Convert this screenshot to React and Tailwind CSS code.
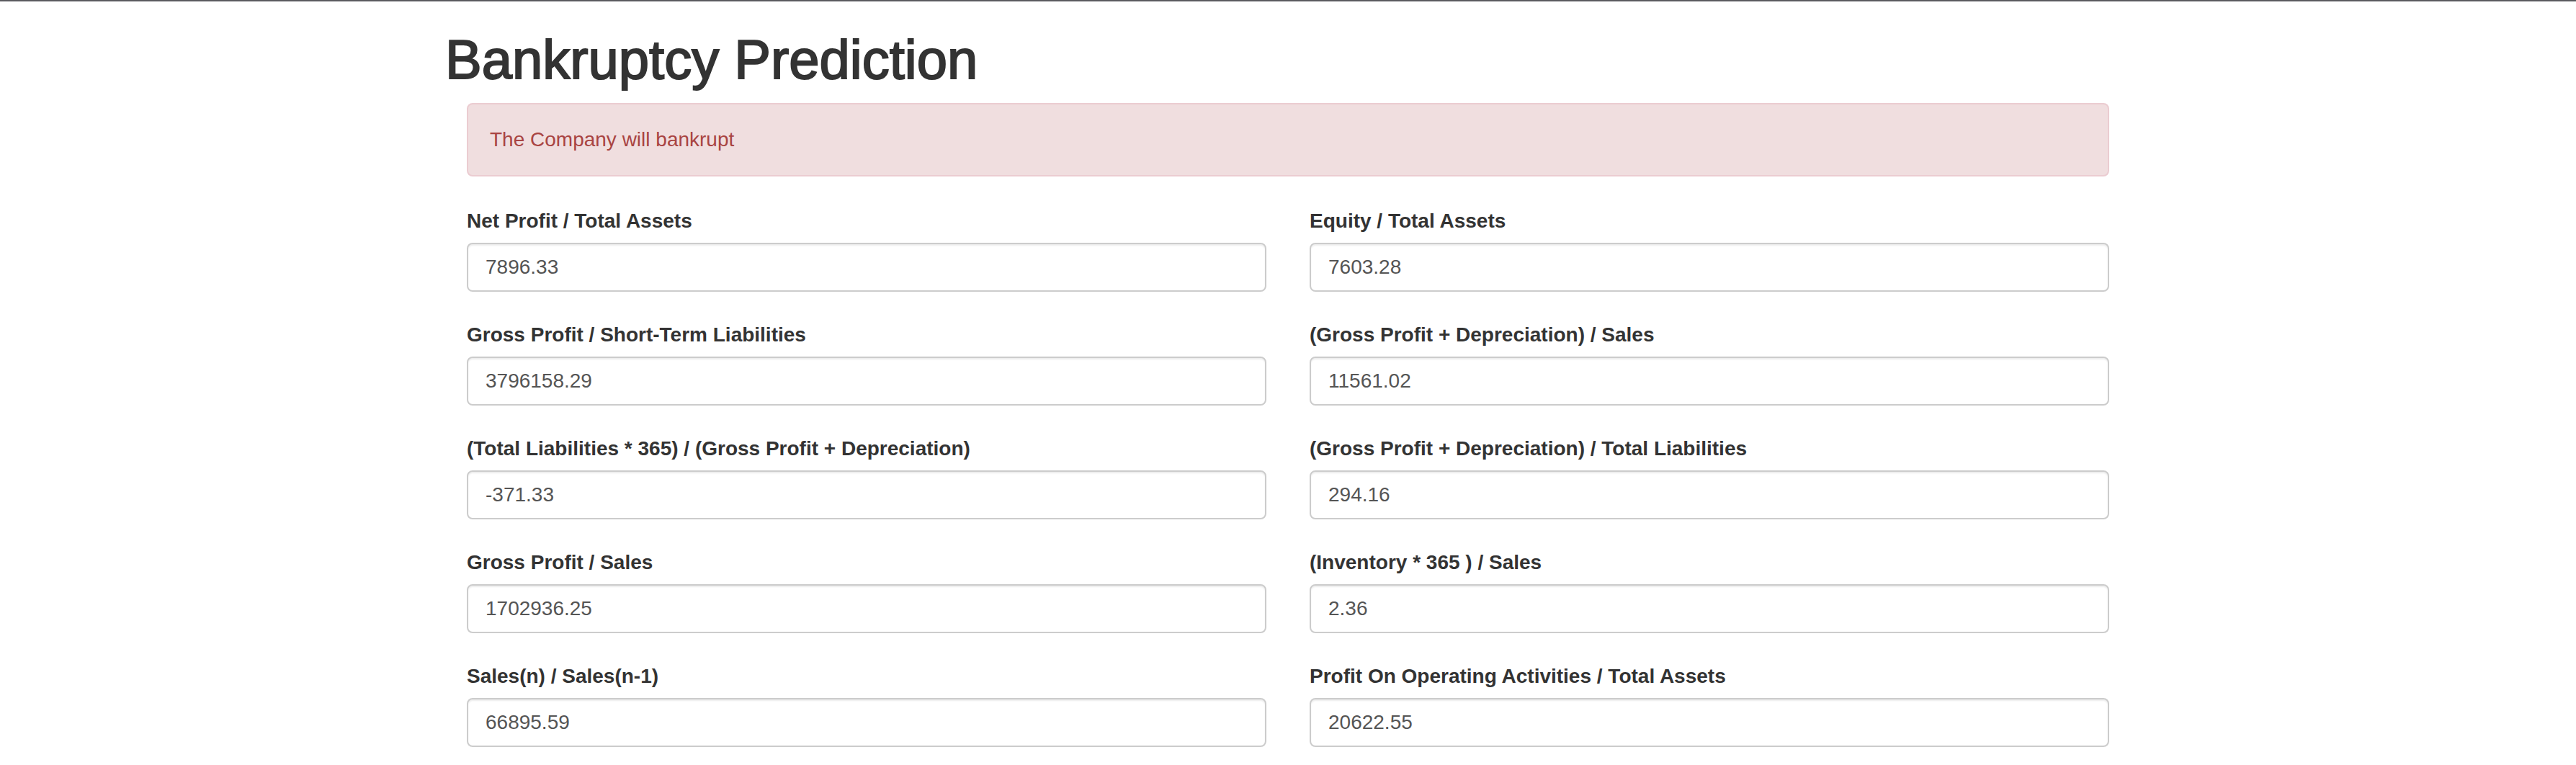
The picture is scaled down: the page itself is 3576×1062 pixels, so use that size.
import React from "react";

const leftFields = [
  { label: "Net Profit / Total Assets", value: "7896.33" },
  { label: "Gross Profit / Short-Term Liabilities", value: "3796158.29" },
  { label: "(Total Liabilities * 365) / (Gross Profit + Depreciation)", value: "-371.33" },
  { label: "Gross Profit / Sales", value: "1702936.25" },
  { label: "Sales(n) / Sales(n-1)", value: "66895.59" },
];

const rightFields = [
  { label: "Equity / Total Assets", value: "7603.28" },
  { label: "(Gross Profit + Depreciation) / Sales", value: "11561.02" },
  { label: "(Gross Profit + Depreciation) / Total Liabilities", value: "294.16" },
  { label: "(Inventory * 365 ) / Sales", value: "2.36" },
  { label: "Profit On Operating Activities / Total Assets", value: "20622.55" },
];

const Field = ({ label, value }) => (
  <div className="mb-[40px]">
    <label className="block text-[28px] leading-[40px] font-bold text-[#333333] mb-[10px]">
      {label}
    </label>
    <input
      type="text"
      readOnly
      value={value}
      className="block w-full h-[68px] px-[24px] py-[12px] text-[28px] leading-[40px] text-[#555555] bg-white border-2 border-[#cccccc] rounded-[8px] shadow-[inset_0_2px_2px_rgba(0,0,0,0.075)] outline-none"
    />
  </div>
);

const App = () => {
  return (
    <div className="min-h-screen bg-white font-['Liberation_Sans',Arial,sans-serif]">
      {/* top rule */}
      <div className="h-[2px] w-full bg-[#5a5a5e]" />

      <div className="w-[2340px] mx-auto">
        <h1 className="mt-[39px] mb-[18px] text-[76px] leading-[84px] font-normal text-[#333333] [-webkit-text-stroke:2px_#333333]">
          Bankruptcy Prediction
        </h1>

        <div className="px-[30px]">
          {/* Result */}
          <div className="mb-[42px] px-[30px] py-[29px] border-2 border-[#ebccd1] bg-[#f0dedf] rounded-[8px] text-[28px] leading-[40px] text-[#a94442]">
            The Company will bankrupt
          </div>

          {/* Ratios */}
          <div className="grid grid-cols-2 gap-x-[60px]">
            {leftFields.map((f, i) => (
              <React.Fragment key={i}>
                <Field label={f.label} value={f.value} />
                <Field label={rightFields[i].label} value={rightFields[i].value} />
              </React.Fragment>
            ))}
          </div>
        </div>
      </div>
    </div>
  );
};

export default App;
